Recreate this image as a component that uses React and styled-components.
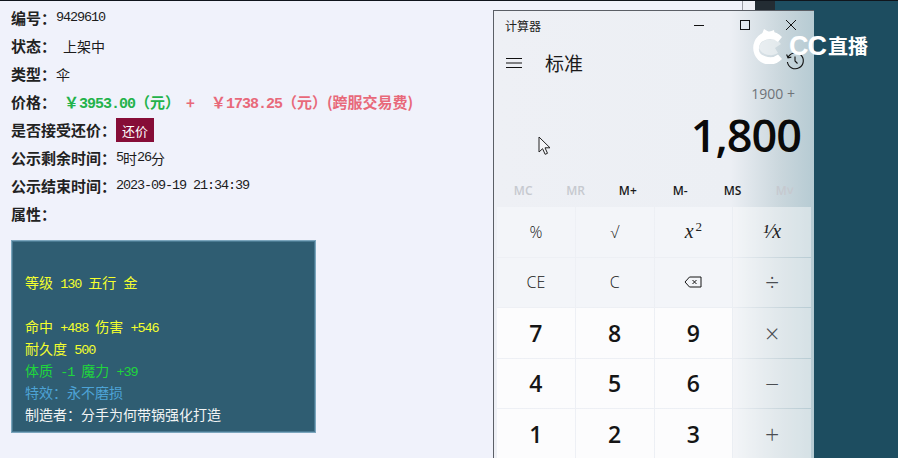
import React from 'react';
import styled, { createGlobalStyle } from 'styled-components';

const Global = createGlobalStyle`
  html, body { margin: 0; padding: 0; width: 898px; height: 458px; overflow: hidden; background: #1d4d60; }
`;
const CJK = `"Liberation Sans", "Noto Sans CJK SC", sans-serif`;
const MONO = `"Liberation Mono", "Noto Sans CJK SC", monospace`;
const UI = `"Open Sans", "Noto Sans CJK SC", sans-serif`;

const Screen = styled.div`
  position: relative; width: 898px; height: 458px; overflow: hidden;
  display: flex; border-top: 1px solid #10151c; box-sizing: border-box;
`;
const Page = styled.main`
  width: 742px; background: #f0f2fb; padding: 3px 0 0 11px; box-sizing: border-box;
`;
const Gutter = styled.div`width: 13px; background: #eef0f6; border-left: 1px solid #9a9ca3; box-sizing: border-box;`;
const Rail = styled.div`width: 20px; background: #232c33;`;
const Backdrop = styled.div`flex: 1; background: #1d4d60;`;
const Row = styled.div`
  height: 28px; display: flex; align-items: center; white-space: nowrap;
  font: 13.5px/28px ${MONO}; color: #1c1c1c; letter-spacing: -1.1px;
`;
const Label = styled.b`
  font: 700 15px/28px "Noto Sans CJK SC", sans-serif; color: #222; letter-spacing: 0;
`;
const Cn = styled.span`font: 14px "Noto Sans CJK SC", sans-serif; letter-spacing: 0; margin-left: ${p => p.$left || 0}px;`;
const Price = styled.span`
  font: 700 15px "Noto Sans CJK SC", sans-serif; letter-spacing: 0; color: ${p => p.$c}; margin-left: ${p => p.$left || 0}px;
`;
const Digits = styled.span`font: 700 15px ${MONO}; letter-spacing: -1px;`;
const Haggle = styled.button`
  width: 38px; height: 24px; border: 0; padding: 0; background: #860d37; color: #fff;
  font: 13px "Noto Sans CJK SC", sans-serif;
`;
const ItemCard = styled.section`
  width: 305px; height: 193px; margin-top: 12px; box-sizing: border-box; padding: 7px 12px 0;
  background: #2f5d72; border: 2px solid #7ba6bd; outline: 1px solid #4a7a92; outline-offset: -2px;
`;
const Line = styled.div`
  height: 22px; font: 14px/22px "Noto Sans CJK SC", sans-serif; white-space: nowrap; word-spacing: 4px; color: ${p => p.$c || '#f4ff2e'};
`;
const Num = styled.span`font: 13.5px/22px ${MONO}; letter-spacing: -1.1px;`;

const Calc = styled.section`
  position: absolute; left: 493px; top: 9px; width: 321px; height: 460px; box-sizing: border-box;
  border: 1px solid #5b5f66; border-right: 0;
  background: linear-gradient(90deg, #eef0f5 0%, #eceff4 74%, #c9d6dc 90%, #b6cbd3 100%);
  font-family: ${UI}; color: #111; display: flex; flex-direction: column;
`;
const TitleBar = styled.header`height: 32px; margin-top: -2px; display: flex; align-items: center; padding-left: 11px;`;
const Title = styled.span`flex: 1; font: 12px "Noto Sans CJK SC", sans-serif; color: #222;`;
const WinBtn = styled.span`width: 46px; height: 32px; display: flex; align-items: center; justify-content: center;`;
const Head = styled.div`height: 40px; margin-top: 2px; display: flex; align-items: center; padding-left: 12px;`;
const ModeName = styled.span`margin-left: 23px; margin-top: -1px; font: 19px "Noto Sans CJK SC", sans-serif; color: #1a1a1a; flex: 1;`;
const HistoryIcon = styled.span`display: flex; margin: -5px 9px 0 0;`;
const Expr = styled.div`height: 26px; margin-top: -2px; padding-right: 19px; text-align: right; font-size: 14px; line-height: 26px; color: #6f7378;`;
const Value = styled.div`height: 58px; margin-top: -1px; padding-right: 13px; text-align: right; font: 600 45px/58px ${UI}; letter-spacing: -1px; color: #0a0a0a;`;
const Mem = styled.div`
  height: 30px; margin-top: 11px; padding: 0 3px; display: grid; grid-template-columns: repeat(6, 1fr);
  align-items: center; justify-items: center;
`;
const MemKey = styled.span`font: 600 12px ${UI}; color: ${p => p.$off ? '#c6c9cf' : '#1a1a1a'};`;
const Keys = styled.div`
  margin: 2px 3px 0; display: grid; grid-template-columns: repeat(4, 1fr); grid-auto-rows: 49.5px; gap: 1px;
`;
const Key = styled.div`
  display: flex; align-items: center; justify-content: center;
  background: ${p => p.$k === 'num' ? '#fcfcfd' : p.$k === 'fn' ? '#f3f5f9' : 'rgba(255,255,255,.42)'};
  font: ${p => p.$k === 'num' ? '600 23px' : p.$k === 'op' ? '300 25px' : '300 16px'} ${UI};
  color: ${p => p.$k === 'op' ? '#4a4d52' : '#151515'};
`;
const Italic = styled.span`font: italic 20px "Liberation Serif", serif; color: #222;`;
const Sup = styled.sup`font-size: 13px; font-style: normal; margin-left: 2px; line-height: 0;`;
const Cursor = styled.svg`position: absolute; left: 44px; top: 125px;`;
const Brand = styled.div`
  position: absolute; left: 751px; top: 27px; display: flex; align-items: center;
  color: #fff; font: 700 27px/36px ${CJK}; letter-spacing: -1px; pointer-events: none;
`;
const BrandCn = styled.span`font: 700 20px/36px "Noto Sans CJK SC", sans-serif; letter-spacing: 0; margin-left: 2px;`;

const Stroke = ({ w = 14, h = 14, vb, children, sw = 1 }) => (
  <svg width={w} height={h} viewBox={vb || `0 0 ${w} ${h}`} fill="none" stroke="currentColor" strokeWidth={sw}>{children}</svg>
);

export default function App() {
  const mem = [['MC', 1], ['MR', 1], ['M+'], ['M-'], ['MS'], ['M˅', 1]];
  return (
    <>
      <Global />
      <Screen>
        <Page>
          <Row><Label>编号：</Label>9429610</Row>
          <Row><Label>状态：</Label><Cn $left={7}>上架中</Cn></Row>
          <Row><Label>类型：</Label><Cn>伞</Cn></Row>
          <Row>
            <Label>价格：</Label>
            <Price $c="#23b24a" $left={8}>￥<Digits>3953.00</Digits>（元）</Price>
            <Price $c="#e8697a" $left={6}>+</Price>
            <Price $c="#e8697a" $left={16}>￥<Digits>1738.25</Digits>（元）(跨服交易费)</Price>
          </Row>
          <Row><Label>是否接受还价：</Label><Haggle>还价</Haggle></Row>
          <Row><Label>公示剩余时间：</Label>5<Cn>时</Cn>26<Cn>分</Cn></Row>
          <Row><Label>公示结束时间：</Label>2023-09-19 21:34:39</Row>
          <Row><Label>属性：</Label></Row>
          <ItemCard>
            <Line />
            <Line>等级 <Num>130</Num> 五行 金</Line>
            <Line />
            <Line>命中 <Num>+488</Num> 伤害 <Num>+546</Num></Line>
            <Line>耐久度 <Num>500</Num></Line>
            <Line $c="#1fd63c">体质 <Num>-1</Num> 魔力 <Num>+39</Num></Line>
            <Line $c="#4da3d6">特效：永不磨损</Line>
            <Line $c="#f2f4f4">制造者：分手为何带锅强化打造</Line>
          </ItemCard>
        </Page>
        <Gutter />
        <Rail />
        <Backdrop />

        <Calc>
          <TitleBar>
            <Title>计算器</Title>
            <WinBtn><Stroke w={12} h={12}><path d="M1 6.5h10" /></Stroke></WinBtn>
            <WinBtn><Stroke w={12} h={12}><rect x="1.5" y="1.5" width="9" height="9" /></Stroke></WinBtn>
            <WinBtn><Stroke w={12} h={12}><path d="M1 1l10 10M11 1L1 11" /></Stroke></WinBtn>
          </TitleBar>
          <Head>
            <Stroke w={16} h={12}><path d="M0 1.5h16M0 6h16M0 10.5h16" /></Stroke>
            <ModeName>标准</ModeName>
            <HistoryIcon>
              <Stroke w={20} h={20} sw={1.1}>
                <path d="M3 6.5A8 8 0 1 1 2.4 11" /><path d="M1.6 3.5L3 6.8l3.3-.7" /><path d="M10 5.5V10l2.5 2.5" />
              </Stroke>
            </HistoryIcon>
          </Head>
          <Expr>1900 +</Expr>
          <Value>1,800</Value>
          <Mem>{mem.map(([m, off]) => <MemKey key={m} $off={off}>{m}</MemKey>)}</Mem>
          <Keys>
            <Key $k="fn">%</Key>
            <Key $k="fn">√</Key>
            <Key $k="fn"><Italic>x<Sup>2</Sup></Italic></Key>
            <Key $k="op"><Italic>¹⁄x</Italic></Key>
            <Key $k="fn">CE</Key>
            <Key $k="fn">C</Key>
            <Key $k="fn">
              <Stroke w={18} h={12}><path d="M5.5 1H17v10H5.5L1 6zM8.5 4l4 4M12.5 4l-4 4" /></Stroke>
            </Key>
            <Key $k="op">÷</Key>
            <Key $k="num">7</Key><Key $k="num">8</Key><Key $k="num">9</Key><Key $k="op">×</Key>
            <Key $k="num">4</Key><Key $k="num">5</Key><Key $k="num">6</Key><Key $k="op">−</Key>
            <Key $k="num">1</Key><Key $k="num">2</Key><Key $k="num">3</Key><Key $k="op">+</Key>
          </Keys>
          <Cursor width="14" height="20" viewBox="0 0 14 20">
            <path d="M1 1v15l3.6-3.3 2.5 5.6 2.4-1-2.5-5.5h5z" fill="#f4f5f8" stroke="#222" strokeWidth="1" />
          </Cursor>
        </Calc>

        <Brand>
          <svg width="38" height="36" viewBox="0 0 38 36">
            <path fill="#fff" fillOpacity=".45" d="M8 20a12 10 0 0 1 22-4l-6 4 3 5a12 10 0 0 1-19-5z" />
            <path fill="#fff" d="M31 9A16.5 16.5 0 1 0 31 31L27 26.500A11 8 0 0 1 8 20A11 9 0 0 1 27 14Z" />
            <path fill="#fff" d="M11 6L13 1L18 4L23 2L24 8Z" />
          </svg>
          CC<BrandCn>直播</BrandCn>
        </Brand>
      </Screen>
    </>
  );
}
